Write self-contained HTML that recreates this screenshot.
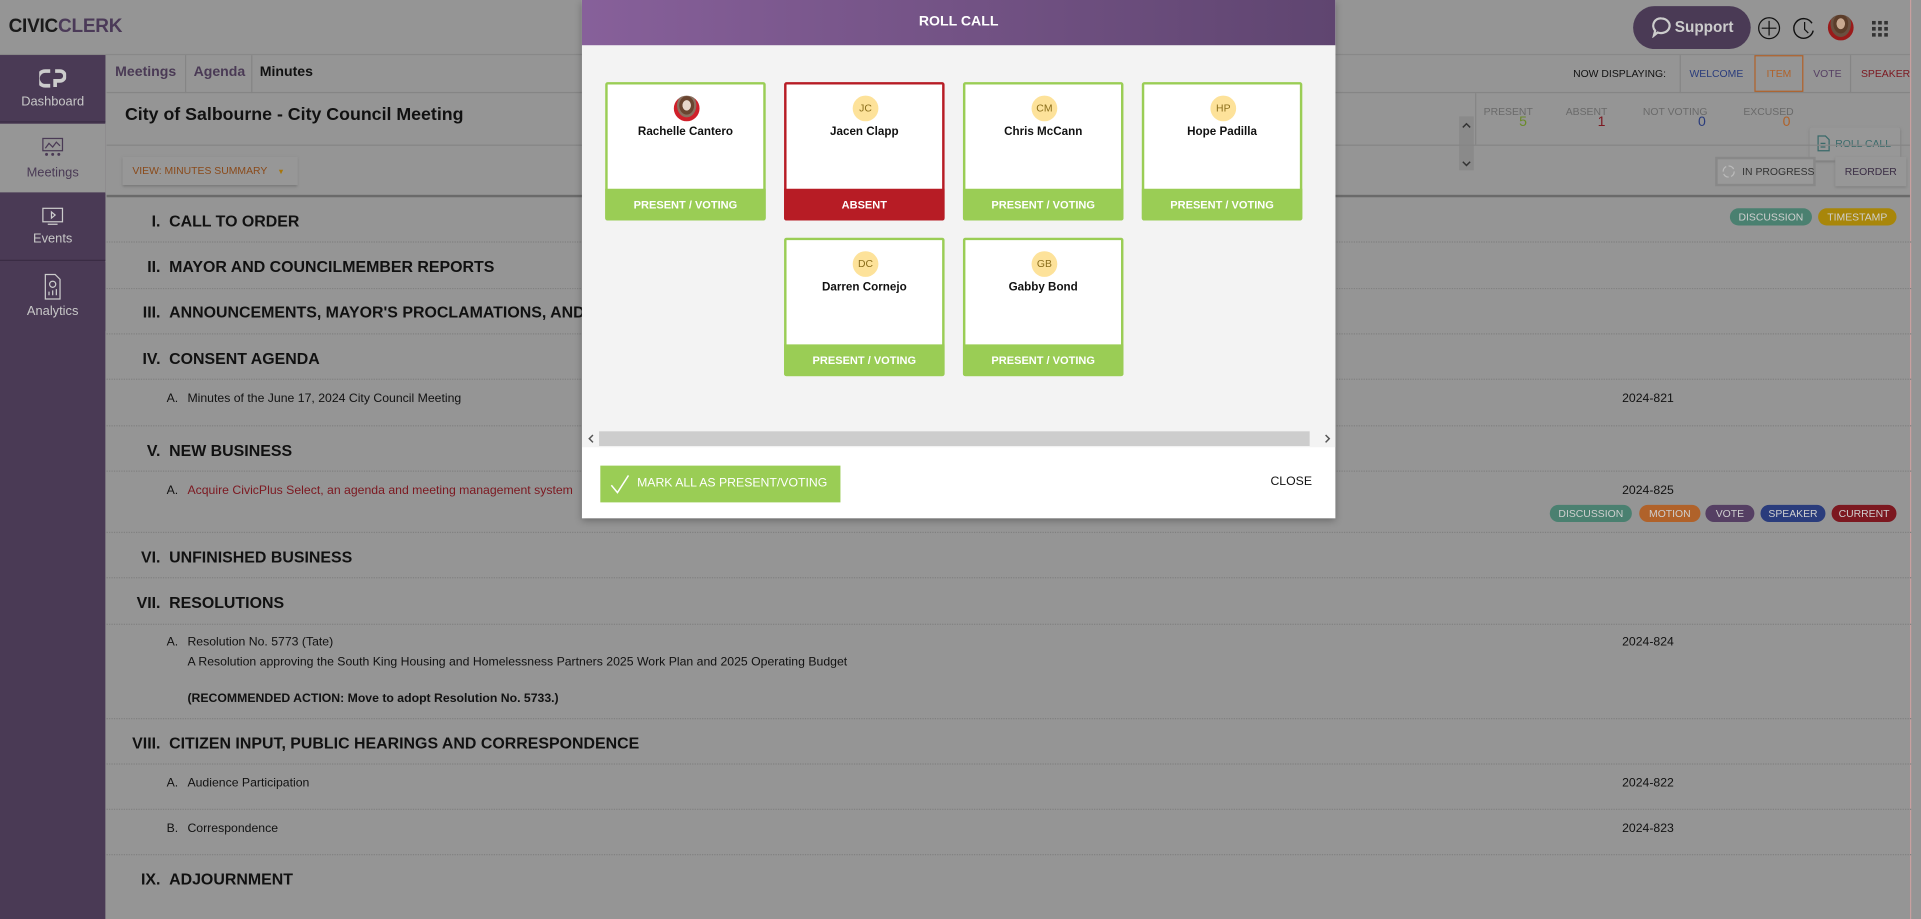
<!DOCTYPE html>
<html><head><meta charset="utf-8"><style>
*{box-sizing:border-box;margin:0;padding:0}
html,body{width:1921px;height:919px;overflow:hidden;background:#959595;font-family:"Liberation Sans",sans-serif}
#s{position:absolute;left:0;top:0;width:1568px;height:750px;transform:scale(1.22513,1.22533);transform-origin:0 0;background:#959595;color:#111}
.a{position:absolute;white-space:nowrap}
.sb{position:absolute;left:0;width:86px;background:#4a3a55;color:#c8c8c8;font-size:10.5px;text-align:center}
.hd{font-size:13px;font-weight:bold}
.n{position:absolute;width:40px;text-align:right}
.sub{font-size:10px}
.dot{position:absolute;left:87px;right:8px;border-top:1px dotted #808080}
.bd{position:absolute;height:14px;border-radius:7px;font-size:8.5px;color:#cfcfcf;text-align:center;line-height:14px}
.card{position:absolute;width:131px;height:113px;background:#fff;border:2px solid #9acd55;border-radius:2px}
.card .av{position:absolute;left:54px;top:9px;width:21px;height:21px;border-radius:50%;background:#fde29a;color:#8a6d1a;font-size:8.5px;text-align:center;line-height:21px}
.card .nm{position:absolute;left:0;right:0;top:33px;text-align:center;font-size:9.5px;font-weight:bold;color:#111}
.card .ft{position:absolute;left:-2px;right:-2px;bottom:-2px;height:26px;background:#9acd55;color:#fff;font-size:9px;font-weight:bold;text-align:center;line-height:26px;border-radius:0 0 2px 2px}
</style></head><body><div id="s">
<!-- header -->
<div class="a" style="left:7px;top:13px;font-size:15.5px;font-weight:bold;letter-spacing:-.2px;color:#1a1a1a">CIVIC<span style="color:#4b3a58">CLERK</span></div>
<div class="a" style="left:0;top:44px;width:1560px;border-top:1px solid #888"></div>
<div class="a" style="left:1333px;top:5px;width:96px;height:35px;border-radius:18px;background:#4a3a55;color:#ccc;font-weight:bold;font-size:12.5px;line-height:35px;padding-left:34px">Support</div>
<svg class="a" style="left:1347px;top:13px" width="18" height="18" viewBox="0 0 18 18"><path d="M9 2a7 6 0 1 1-3 11.5L3 16l1-4A6 6 0 0 1 9 2z" fill="none" stroke="#ccc" stroke-width="1.8"/></svg>
<svg class="a" style="left:1434px;top:13px" width="20" height="20"><circle cx="10" cy="10" r="8.5" fill="none" stroke="#111" stroke-width="1"/><path d="M10 4v12M4 10h12" stroke="#111"/></svg>
<svg class="a" style="left:1463px;top:13px" width="20" height="20"><path d="M17 12A8 8 0 1 1 16 6" fill="none" stroke="#111" stroke-width="1.2"/><path d="M10 5v6l3 3" fill="none" stroke="#111"/></svg>
<div class="a" style="left:1492px;top:12px;width:21px;height:21px;border-radius:50%;background:radial-gradient(ellipse at 50% 35%,#c8a890 0 22%,#5c3d2a 24% 40%,#6a5040 42% 55%,#9a1a1a 57%)"></div>
<svg class="a" style="left:1528px;top:17px" width="13" height="13"><g fill="#333"><rect x="0" y="0" width="3" height="3"/><rect x="5" y="0" width="3" height="3"/><rect x="10" y="0" width="3" height="3"/><rect x="0" y="5" width="3" height="3"/><rect x="5" y="5" width="3" height="3"/><rect x="10" y="5" width="3" height="3"/><rect x="0" y="10" width="3" height="3"/><rect x="5" y="10" width="3" height="3"/><rect x="10" y="10" width="3" height="3"/></g></svg>
<!-- sidebar -->
<div class="sb" style="top:45px;height:705px"></div>
<div class="sb" style="top:45px;height:55px;border-bottom:1px solid #3a2d44"><svg style="margin-top:11px" width="22" height="16"><path d="M9 2H5a6 6 0 0 0 0 12h4M13 2h4a4 4 0 0 1 0 8h-4v5" fill="none" stroke="#ccc" stroke-width="3"/></svg><div style="margin-top:2px">Dashboard</div></div>
<div class="sb" style="top:101px;height:56px;background:#969696;color:#4a3a55"><svg style="margin-top:10px" width="20" height="20"><rect x="2" y="2" width="16" height="10" fill="none" stroke="#4a3a55"/><path d="M4 10l3-4 3 3 3-4 3 3" fill="none" stroke="#4a3a55"/><circle cx="5" cy="15" r="1.2" fill="#4a3a55"/><circle cx="10" cy="15" r="1.2" fill="#4a3a55"/><circle cx="15" cy="15" r="1.2" fill="#4a3a55"/></svg><div style="margin-top:1px">Meetings</div></div>
<div class="sb" style="top:158px;height:55px;border-bottom:1px solid #3a2d44"><svg style="margin-top:10px" width="20" height="18"><rect x="2" y="2" width="16" height="11" fill="none" stroke="#ccc"/><path d="M9 5l3 2.5-3 2.5z" fill="none" stroke="#ccc"/><path d="M6 15h8" stroke="#ccc"/></svg><div>Events</div></div>
<div class="sb" style="top:214px;height:56px"><svg style="margin-top:9px" width="18" height="22"><path d="M3 1h8l4 4v16H3z" fill="none" stroke="#ccc"/><circle cx="9" cy="9" r="2.5" fill="none" stroke="#ccc"/><path d="M6 18v-3M9 18v-4M12 18v-5" stroke="#ccc"/></svg><div>Analytics</div></div>
<!-- tabs -->
<div class="a" style="left:87px;top:45px;width:1473px;height:31px;border-bottom:1px solid #858585"></div>
<div class="a" style="left:94px;top:53px;font-size:11.5px;font-weight:bold;color:#4a3a55">Meetings</div>
<div class="a" style="left:151px;top:45px;height:31px;border-left:1px solid #858585"></div>
<div class="a" style="left:158px;top:53px;font-size:11.5px;font-weight:bold;color:#4a3a55">Agenda</div>
<div class="a" style="left:205px;top:45px;height:31px;border-left:1px solid #858585"></div>
<div class="a" style="left:212px;top:53px;font-size:11.5px;font-weight:bold;color:#111">Minutes</div>
<div class="a" style="left:1284px;top:55px;font-size:8.5px;color:#111">NOW DISPLAYING:</div>
<div class="a" style="left:1371px;top:45px;height:31px;border-left:1px solid #858585"></div>
<div class="a" style="left:1379px;top:55px;font-size:8.5px;color:#2a3c7c">WELCOME</div>
<div class="a" style="left:1432px;top:45px;width:40px;height:30px;border:1px solid #b0622a;font-size:8.5px;color:#b0622a;text-align:center;line-height:28px">ITEM</div>
<div class="a" style="left:1480px;top:55px;font-size:8.5px;color:#553f63">VOTE</div>
<div class="a" style="left:1510px;top:45px;height:31px;border-left:1px solid #858585"></div>
<div class="a" style="left:1519px;top:55px;font-size:8.5px;color:#7c1820">SPEAKER</div>
<!-- title -->
<div class="a" style="left:102px;top:86px;font-size:14.5px;font-weight:bold;color:#111">City of Salbourne - City Council Meeting</div>
<div class="a" style="left:1191px;top:95px;width:12px;height:44px;background:#8a8a8a"></div>
<svg class="a" style="left:1192px;top:98px" width="10" height="40"><path d="M2 6l3-3 3 3M2 34l3 3 3-3" fill="none" stroke="#333" stroke-width="1.2"/></svg>
<div class="a" style="left:1204px;top:76px;height:42px;border-left:1px solid #858585"></div>
<div class="a" style="left:1211px;top:86px;font-size:8.5px;color:#6a6a6a">PRESENT</div><div class="a" style="left:1240px;top:94px;font-size:11.5px;color:#6a8a2a">5</div>
<div class="a" style="left:1278px;top:86px;font-size:8.5px;color:#6a6a6a">ABSENT</div><div class="a" style="left:1304px;top:94px;font-size:11.5px;color:#7c1820">1</div>
<div class="a" style="left:1341px;top:86px;font-size:8.5px;color:#6a6a6a">NOT VOTING</div><div class="a" style="left:1386px;top:94px;font-size:11.5px;color:#2a3c7c">0</div>
<div class="a" style="left:1423px;top:86px;font-size:8.5px;color:#6a6a6a">EXCUSED</div><div class="a" style="left:1455px;top:94px;font-size:11.5px;color:#b0622a">0</div>
<div class="a" style="left:1477px;top:104px;width:74px;height:27px;border-radius:2px;background:#979797;box-shadow:0 1px 2px #7a7a7a;font-size:8.5px;color:#3a6a6a;line-height:27px;padding-left:21px">ROLL CALL</div>
<svg class="a" style="left:1483px;top:110px" width="12" height="14"><path d="M1 1h6l3 3v9H1z" fill="none" stroke="#3a6a6a"/><path d="M3 7h4M3 10h4" stroke="#3a6a6a"/></svg>
<div class="a" style="left:87px;top:118px;width:1473px;border-top:1px solid #858585"></div>
<div class="a" style="left:100px;top:128px;width:143px;height:23px;background:#979797;box-shadow:0 1px 2px #777;font-size:8.5px;color:#8a4a1a;line-height:23px;padding-left:8px">VIEW: MINUTES SUMMARY <span style="margin-left:6px;font-size:6px;color:#a8760a">&#9660;</span></div>
<div class="a" style="left:1400px;top:128px;width:82px;height:24px;background:#888;padding:2px"><div style="background:#999;height:20px;font-size:8.5px;color:#333;line-height:20px;padding-left:20px">IN PROGRESS</div></div>
<svg class="a" style="left:1405px;top:134px" width="12" height="12"><circle cx="6" cy="6" r="4.5" fill="none" stroke="#bbb" stroke-dasharray="5 2"/></svg>
<div class="a" style="left:1498px;top:128px;width:58px;height:24px;background:#979797;box-shadow:0 1px 2px #808080;font-size:8.5px;color:#3a2d44;text-align:center;line-height:24px">REORDER</div>
<div class="a" style="left:87px;top:159px;width:1473px;border-top:2px solid #6a6a6a"></div>
<div class="a" style="left:1559px;top:0;width:9px;height:750px;background:#959595;border-left:1px solid #c9a0a0"></div>
<!-- agenda -->
<div class="a hd" style="left:0;top:173px;width:100%"><span class="n" style="left:91px">I.</span><span style="position:absolute;left:138px">CALL TO ORDER</span></div>
<div class="bd" style="left:1412px;top:170px;width:67px;background:#4a8070">DISCUSSION</div><div class="bd" style="left:1484px;top:170px;width:64px;background:#a8860a">TIMESTAMP</div>
<div class="dot" style="top:197px"></div>
<div class="a hd" style="left:0;top:210px;width:100%"><span class="n" style="left:91px">II.</span><span style="position:absolute;left:138px">MAYOR AND COUNCILMEMBER REPORTS</span></div>
<div class="dot" style="top:235px"></div>
<div class="a hd" style="left:0;top:247px;width:100%"><span class="n" style="left:91px">III.</span><span style="position:absolute;left:138px">ANNOUNCEMENTS, MAYOR'S PROCLAMATIONS, AND PRESENTATIONS</span></div>
<div class="dot" style="top:272px"></div>
<div class="a hd" style="left:0;top:285px;width:100%"><span class="n" style="left:91px">IV.</span><span style="position:absolute;left:138px">CONSENT AGENDA</span></div>
<div class="dot" style="top:309px"></div>
<div class="a sub" style="left:136px;top:320px">A.</div><div class="a sub" style="left:153px;top:320px">Minutes of the June 17, 2024 City Council Meeting</div><div class="a sub" style="left:1324px;top:320px">2024-821</div>
<div class="dot" style="top:347px"></div>
<div class="a hd" style="left:0;top:360px;width:100%"><span class="n" style="left:91px">V.</span><span style="position:absolute;left:138px">NEW BUSINESS</span></div>
<div class="dot" style="top:384px"></div>
<div class="a sub" style="left:136px;top:395px">A.</div><div class="a sub" style="left:153px;top:395px;color:#7c1820">Acquire CivicPlus Select, an agenda and meeting management system</div><div class="a sub" style="left:1324px;top:395px">2024-825</div>
<div class="bd" style="left:1265px;top:412px;width:67px;background:#4a8070">DISCUSSION</div>
<div class="bd" style="left:1338px;top:412px;width:50px;background:#b0622a">MOTION</div>
<div class="bd" style="left:1392px;top:412px;width:40px;background:#553f63">VOTE</div>
<div class="bd" style="left:1437px;top:412px;width:53px;background:#2a3c7c">SPEAKER</div>
<div class="bd" style="left:1495px;top:412px;width:53px;background:#7c1820">CURRENT</div>
<div class="dot" style="top:434px"></div>
<div class="a hd" style="left:0;top:447px;width:100%"><span class="n" style="left:91px">VI.</span><span style="position:absolute;left:138px">UNFINISHED BUSINESS</span></div>
<div class="dot" style="top:471px"></div>
<div class="a hd" style="left:0;top:484px;width:100%"><span class="n" style="left:91px">VII.</span><span style="position:absolute;left:138px">RESOLUTIONS</span></div>
<div class="dot" style="top:509px"></div>
<div class="a sub" style="left:136px;top:519px">A.</div><div class="a sub" style="left:153px;top:519px">Resolution No. 5773 (Tate)</div><div class="a sub" style="left:1324px;top:519px">2024-824</div>
<div class="a sub" style="left:153px;top:535px">A Resolution approving the South King Housing and Homelessness Partners 2025 Work Plan and 2025 Operating Budget</div>
<div class="a sub" style="left:153px;top:565px;font-weight:bold">(RECOMMENDED ACTION: Move to adopt Resolution No. 5733.)</div>
<div class="dot" style="top:586px"></div>
<div class="a hd" style="left:0;top:599px;width:100%"><span class="n" style="left:91px">VIII.</span><span style="position:absolute;left:138px">CITIZEN INPUT, PUBLIC HEARINGS AND CORRESPONDENCE</span></div>
<div class="dot" style="top:623px"></div>
<div class="a sub" style="left:136px;top:634px">A.</div><div class="a sub" style="left:153px;top:634px">Audience Participation</div><div class="a sub" style="left:1324px;top:634px">2024-822</div>
<div class="dot" style="top:660px"></div>
<div class="a sub" style="left:136px;top:671px">B.</div><div class="a sub" style="left:153px;top:671px">Correspondence</div><div class="a sub" style="left:1324px;top:671px">2024-823</div>
<div class="dot" style="top:697px"></div>
<div class="a hd" style="left:0;top:710px;width:100%"><span class="n" style="left:91px">IX.</span><span style="position:absolute;left:138px">ADJOURNMENT</span></div>
<!-- modal -->
<div class="a" style="left:475px;top:0;width:615px;height:423px;background:#fff;box-shadow:0 2px 6px rgba(0,0,0,.3);overflow:hidden">
 <div style="position:absolute;left:0;top:0;width:100%;height:37px;background:linear-gradient(90deg,#87609a,#5f4570);color:#fff;font-size:11.5px;font-weight:bold;text-align:center;line-height:37px">ROLL CALL</div>
 <div style="position:absolute;left:0;top:37px;width:100%;height:328px;background:#f3f3f3"></div>
 <div style="position:absolute;left:14px;top:352px;width:580px;height:12px;background:#cdcdcd"></div>
 <svg style="position:absolute;left:4px;top:353px" width="8" height="10"><path d="M5 2L2 5l3 3" fill="none" stroke="#555" stroke-width="1.2"/></svg>
 <svg style="position:absolute;left:604px;top:353px" width="8" height="10"><path d="M3 2l3 3-3 3" fill="none" stroke="#555" stroke-width="1.2"/></svg>
 <div class="card" style="left:19px;top:67px"><div class="av" style="background:radial-gradient(ellipse at 50% 38%,#e8d8cc 0 22%,#6a4530 24% 40%,#8a7060 42% 52%,#d0202a 54%)"></div><div class="nm">Rachelle Cantero</div><div class="ft">PRESENT / VOTING</div></div>
 <div class="card" style="left:165px;top:67px;border-color:#b71c25"><div class="av">JC</div><div class="nm">Jacen Clapp</div><div class="ft" style="background:#b71c25">ABSENT</div></div>
 <div class="card" style="left:311px;top:67px"><div class="av">CM</div><div class="nm">Chris McCann</div><div class="ft">PRESENT / VOTING</div></div>
 <div class="card" style="left:457px;top:67px"><div class="av">HP</div><div class="nm">Hope Padilla</div><div class="ft">PRESENT / VOTING</div></div>
 <div class="card" style="left:165px;top:194px"><div class="av">DC</div><div class="nm">Darren Cornejo</div><div class="ft">PRESENT / VOTING</div></div>
 <div class="card" style="left:311px;top:194px"><div class="av">GB</div><div class="nm">Gabby Bond</div><div class="ft">PRESENT / VOTING</div></div>
 <div style="position:absolute;left:15px;top:380px;width:196px;height:30px;background:#9acd55;color:#fff;font-size:10px;line-height:30px;padding-left:30px">MARK ALL AS PRESENT/VOTING</div>
 <svg style="position:absolute;left:22px;top:386px" width="18" height="18"><path d="M2 10l5 6L16 2" fill="none" stroke="#fff" stroke-width="1.2"/></svg>
 <div style="position:absolute;left:562px;top:388px;font-size:10px;color:#111">CLOSE</div>
</div>
</div></body></html>
